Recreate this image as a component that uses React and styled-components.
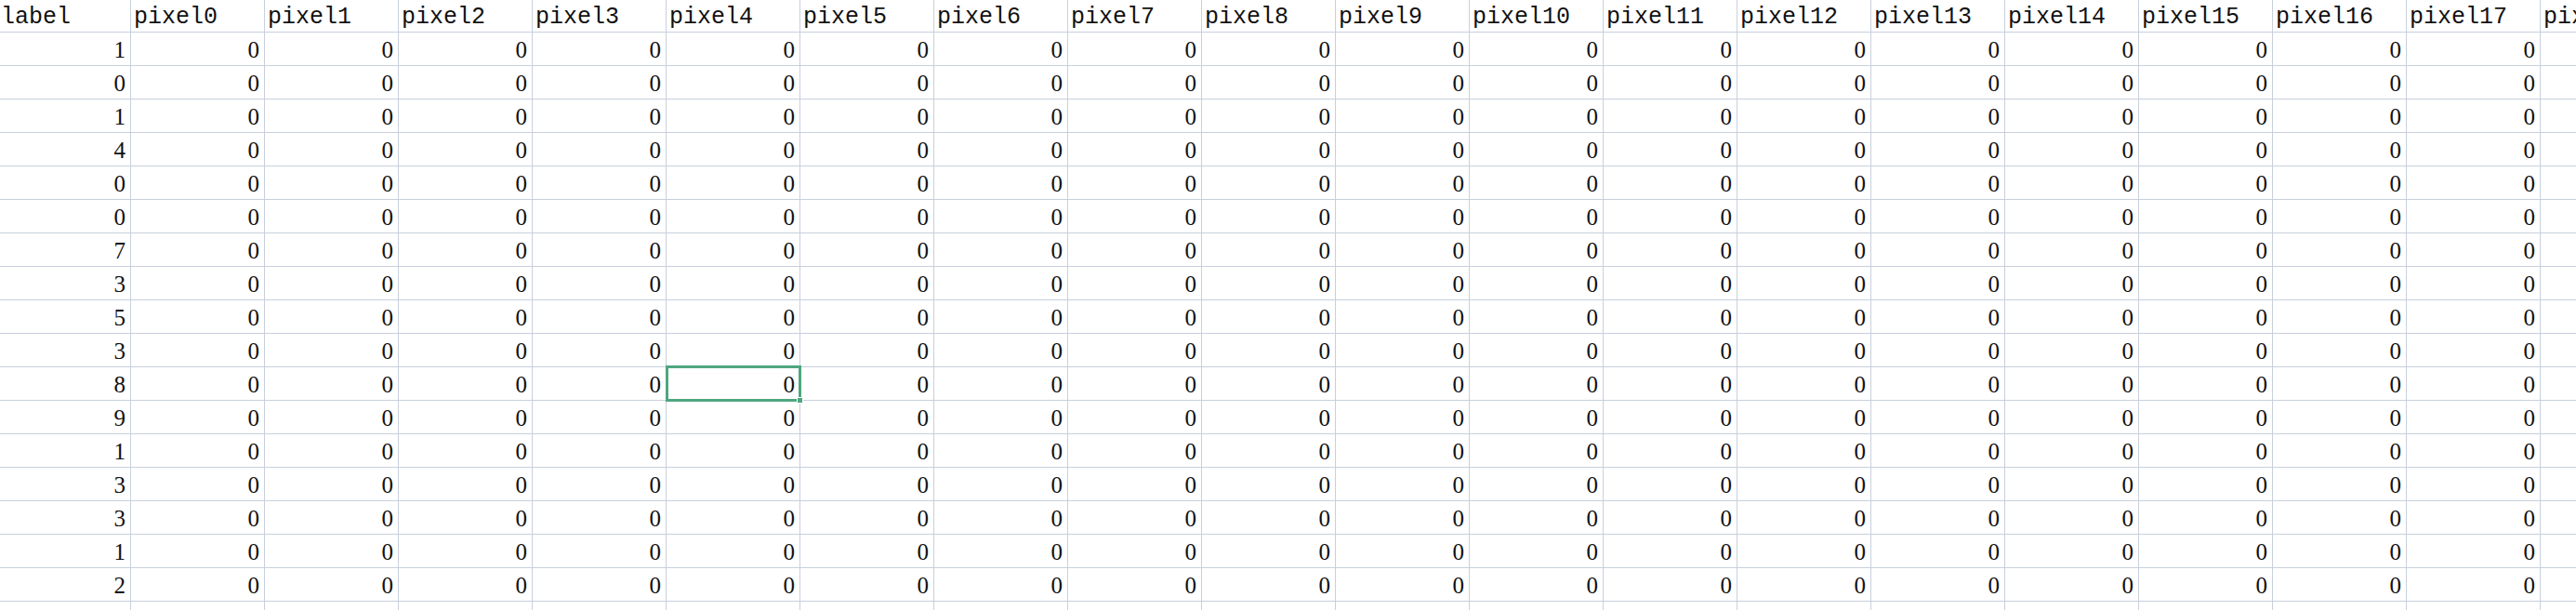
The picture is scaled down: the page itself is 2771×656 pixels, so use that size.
import React from "react";
import styled, { createGlobalStyle } from "styled-components";

const Global = createGlobalStyle`
  html, body { margin: 0; padding: 0; background: #ffffff; overflow: hidden; }
  body { width: 2771px; height: 656px; }
`;

const GRID = "#c8d0dd";
const COLS = 20;

const Sheet = styled.div`
  display: grid;
  grid-template-columns: 141px repeat(${COLS - 1}, 144px);
  grid-auto-rows: 36px;
  grid-template-rows: 35px;
  width: 2771px;
  height: 656px;
  overflow: hidden;
`;

const Cell = styled.div`
  position: relative;
  box-sizing: border-box;
  border-right: 1px solid ${GRID};
  border-bottom: 1px solid ${GRID};
  display: flex;
  align-items: flex-end;
  justify-content: ${(p) => (p.$head ? "flex-start" : "flex-end")};
  padding: ${(p) => (p.$head ? "0 0 3px 3px" : "0 5px 4px 0")};
  font-family: ${(p) =>
    p.$head ? '"Liberation Mono", "DejaVu Sans Mono", monospace' : '"Liberation Serif", "Times New Roman", serif'};
  font-size: 25px;
  line-height: 1;
  color: #111;
  white-space: nowrap;
  overflow: visible;
  &:first-child { padding-left: ${(p) => (p.$head ? "1px" : "0")}; }
`;

const Selection = styled.div`
  position: absolute;
  left: -1px;
  top: -2px;
  right: -2px;
  bottom: -2px;
  border: 3px solid #4ea680;
  pointer-events: none;
  z-index: 2;
`;

const Handle = styled.div`
  position: absolute;
  right: -5px;
  bottom: -5px;
  width: 7px;
  height: 7px;
  background: #4ea680;
  border: 1px solid #ffffff;
  box-sizing: border-box;
`;

const labels = [1, 0, 1, 4, 0, 0, 7, 3, 5, 3, 8, 9, 1, 3, 3, 1, 2, ""];
const headers = ["label", ...Array.from({ length: COLS - 1 }, (_, i) => `pixel${i}`)];

export default function App() {
  return (
    <>
      <Global />
      <Sheet>
        {headers.map((h) => (
          <Cell key={h} $head>
            {h}
          </Cell>
        ))}
        {labels.map((lab, r) =>
          headers.map((h, c) => {
            const selected = r === 10 && c === 5;
            const text = lab === "" || c === COLS - 1 ? "" : c === 0 ? lab : 0;
            return (
              <Cell key={`${r}-${c}`}>
                {text}
                {selected && (
                  <Selection>
                    <Handle />
                  </Selection>
                )}
              </Cell>
            );
          })
        )}
      </Sheet>
    </>
  );
}
